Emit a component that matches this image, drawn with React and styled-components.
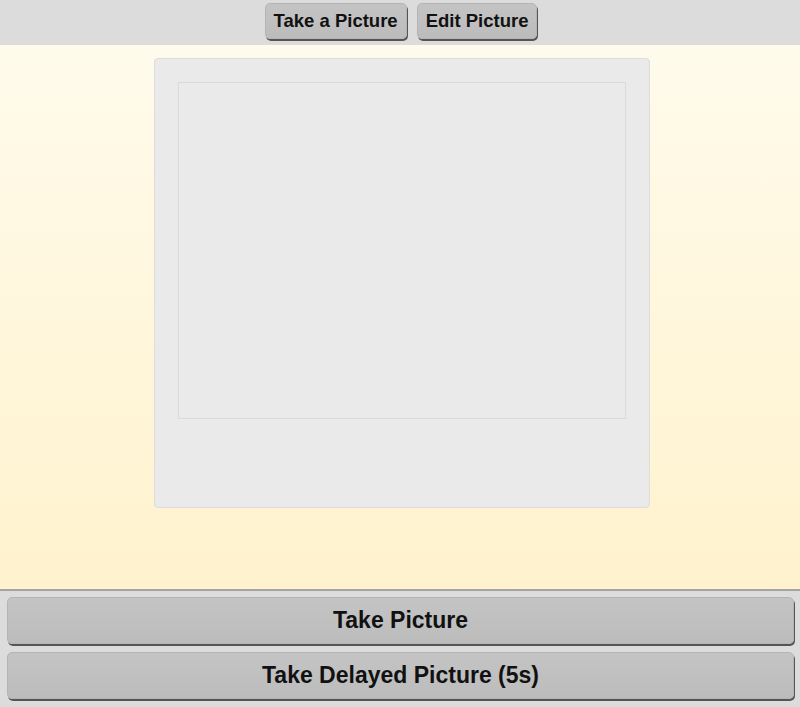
import styled, { createGlobalStyle } from "styled-components";

const Global = createGlobalStyle`
  html, body, #root { margin: 0; padding: 0; height: 100%; }
  body { font-family: "Liberation Sans", Arial, sans-serif; }
`;

const Page = styled.div`
  height: 707px;
  display: flex;
  flex-direction: column;
  overflow: hidden;
`;

const TopBar = styled.div`
  height: 45px;
  flex-shrink: 0;
  background: #dcdcdc;
  display: flex;
  justify-content: center;
  align-items: flex-start;
  gap: 10px;
  padding: 3px 0 0 2px;
  box-sizing: border-box;
`;

const Button = styled.button`
  font-family: "Liberation Sans", Arial, sans-serif;
  font-weight: bold;
  color: #111;
  background: linear-gradient(#c4c4c4, #bcbcbc);
  border: 1px solid #b4b4b4;
  border-radius: 5px;
  box-shadow: 1px 2px 0 #555;
  cursor: pointer;
  flex-shrink: 0;
  font-size: ${(p) => (p.$big ? "23px" : "18.5px")};
  height: ${(p) => (p.$big ? "47px" : "36px")};
  padding: 0 ${(p) => (p.$big ? "0" : "8px")};
  width: ${(p) => (p.$big ? "100%" : "auto")};
`;

const Main = styled.div`
  flex: 1;
  background: linear-gradient(#fffbec, #fff2cd);
  display: flex;
  justify-content: center;
  align-items: flex-start;
  padding: 13px 0 0 3px;
`;

const Frame = styled.div`
  width: 496px;
  height: 450px;
  box-sizing: border-box;
  background: #eaeaea;
  border: 1px solid #dcdcdc;
  border-radius: 4px;
  padding: 23px;
`;

const Photo = styled.div`
  height: 335px;
  border: 1px solid #dadada;
  background: #eaeaea;
`;

const Bottom = styled.div`
  flex-shrink: 0;
  border-top: 2px solid #a4a4a4;
  background: #dcdcdc;
  padding: 6px 6px 8px 7px;
  display: flex;
  flex-direction: column;
  gap: 8px;
`;

export default function App() {
  return (
    <Page>
      <Global />
      <TopBar>
        <Button>Take a Picture</Button>
        <Button>Edit Picture</Button>
      </TopBar>
      <Main>
        <Frame>
          <Photo />
        </Frame>
      </Main>
      <Bottom>
        <Button $big>Take Picture</Button>
        <Button $big>Take Delayed Picture (5s)</Button>
      </Bottom>
    </Page>
  );
}
